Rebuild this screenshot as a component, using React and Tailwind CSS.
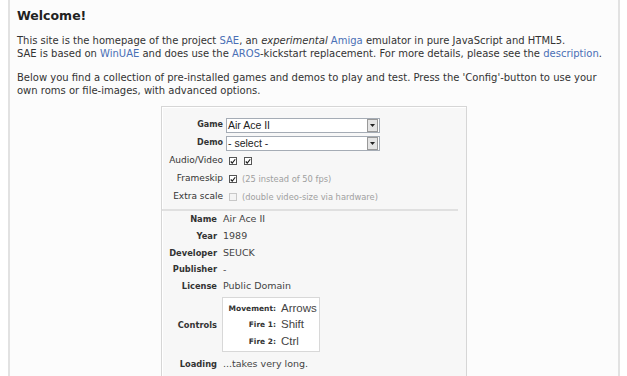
import React from 'react';

const Select = ({ value }) => (
    <div className="-ml-[3px] flex items-center h-[15px] w-[154px] border border-[#a5acb5] bg-white">
        <span className="flex-1 pl-[1px] text-[10.5px] leading-none text-[#222] font-['Liberation_Sans',sans-serif]">{value}</span>
        <span className="flex items-center justify-center w-[11px] h-[13px] mr-px bg-[#e4e4e4] border border-[#999]">
            <svg width="5" height="3" viewBox="0 0 5 3"><path d="M0 0h5L2.5 3z" fill="#222" /></svg>
        </span>
    </div>
);

const Check = ({ checked, disabled }) => (
    <span className={`inline-flex items-center justify-center w-[8px] h-[8px] border ${disabled ? 'border-[#c8c8c8] bg-[#f4f4f4]' : 'border-[#555] bg-white'}`}>
        {checked && (
            <svg width="7" height="7" viewBox="0 0 8 8"><path d="M1 4l2 2 4-5" stroke="#222" strokeWidth="1.6" fill="none" /></svg>
        )}
    </span>
);

const FormRow = ({ label, bold, children }) => (
    <div className="flex items-center h-[18px]">
        <div className={`w-[61px] text-right text-[#333] ${bold ? 'text-[8px] font-bold' : 'text-[9px]'}`}>{label}</div>
        <div className="flex items-center gap-[7px] pl-[6px]">{children}</div>
    </div>
);

const InfoRow = ({ label, children }) => (
    <div className="flex items-center h-[16.75px]">
        <div className="w-[55px] text-right text-[8.3px] font-bold text-[#333]">{label}</div>
        <div className="pl-[6px] text-[9.5px] text-[#444]">{children}</div>
    </div>
);

const Link = ({ children }) => <span className="text-[#4a6fb5]">{children}</span>;

export default function App() {
    return (
        <div className="w-[627px] h-[376px] overflow-hidden bg-white font-['DejaVu_Sans',sans-serif]">
            <div className="ml-[8px] w-[612px] h-[376px] border-x-2 border-[#e2e2e2] bg-[#fcfcfc] pl-[7px] pt-[8px]">
                <h1 className="text-[12.5px] font-bold text-[#222] leading-[16px]">Welcome!</h1>
                <p className="mt-[10px] text-[10px] leading-[13px] text-[#333]">
                    This site is the homepage of the project <Link>SAE</Link>, an <i>experimental</i> <Link>Amiga</Link> emulator in pure JavaScript and HTML5.<br />
                    SAE is based on <Link>WinUAE</Link> and does use the <Link>AROS</Link>-kickstart replacement. For more details, please see the <Link>description</Link>.
                </p>
                <p className="mt-[11px] text-[10px] leading-[13px] text-[#333]">
                    Below you find a collection of pre-installed games and demos to play and test. Press the 'Config'-button to use your<br />
                    own roms or file-images, with advanced options.
                </p>

                <div className="ml-[144px] mt-[9px] w-[306px] h-[300px] border border-[#d6d6d6] bg-[#f7f7f7] pt-[9px] shadow-[inset_1px_1px_0_#fff]">
                    <FormRow label="Game" bold><Select value="Air Ace II" /></FormRow>
                    <FormRow label="Demo" bold><Select value="- select -" /></FormRow>
                    <FormRow label="Audio/Video"><Check checked /><Check checked /></FormRow>
                    <FormRow label="Frameskip">
                        <Check checked />
                        <span className="text-[8.3px] text-[#a0a0a0] -ml-[2px]">(25 instead of 50 fps)</span>
                    </FormRow>
                    <FormRow label="Extra scale">
                        <Check disabled />
                        <span className="text-[8.3px] text-[#a0a0a0] -ml-[2px]">(double video-size via hardware)</span>
                    </FormRow>

                    <div className="mt-[3px] mr-[8px] border-t-2 border-[#e0e0e0]" />

                    <div>
                        <InfoRow label="Name">Air Ace II</InfoRow>
                        <InfoRow label="Year">1989</InfoRow>
                        <InfoRow label="Developer">SEUCK</InfoRow>
                        <InfoRow label="Publisher">-</InfoRow>
                        <InfoRow label="License">Public Domain</InfoRow>
                        <div className="flex items-center mt-[2.5px]">
                            <div className="w-[55px] text-right text-[8.3px] font-bold text-[#333]">Controls</div>
                            <div className="ml-[5px] w-[98px] h-[55px] border border-[#d8d8d8] bg-white flex flex-col justify-center">
                                {[['Movement:', 'Arrows'], ['Fire 1:', 'Shift'], ['Fire 2:', 'Ctrl']].map(([k, v]) => (
                                    <div key={k} className="flex items-center h-[16.5px]">
                                        <div className="w-[53px] text-right text-[7.5px] font-bold text-[#333]">{k}</div>
                                        <div className="pl-[5px] text-[11.5px] text-[#444] font-['Liberation_Sans',sans-serif]">{v}</div>
                                    </div>
                                ))}
                            </div>
                        </div>
                        <div className="mt-[3.5px]">
                            <InfoRow label="Loading">...takes very long.</InfoRow>
                        </div>
                    </div>
                </div>
            </div>
        </div>
    );
}
